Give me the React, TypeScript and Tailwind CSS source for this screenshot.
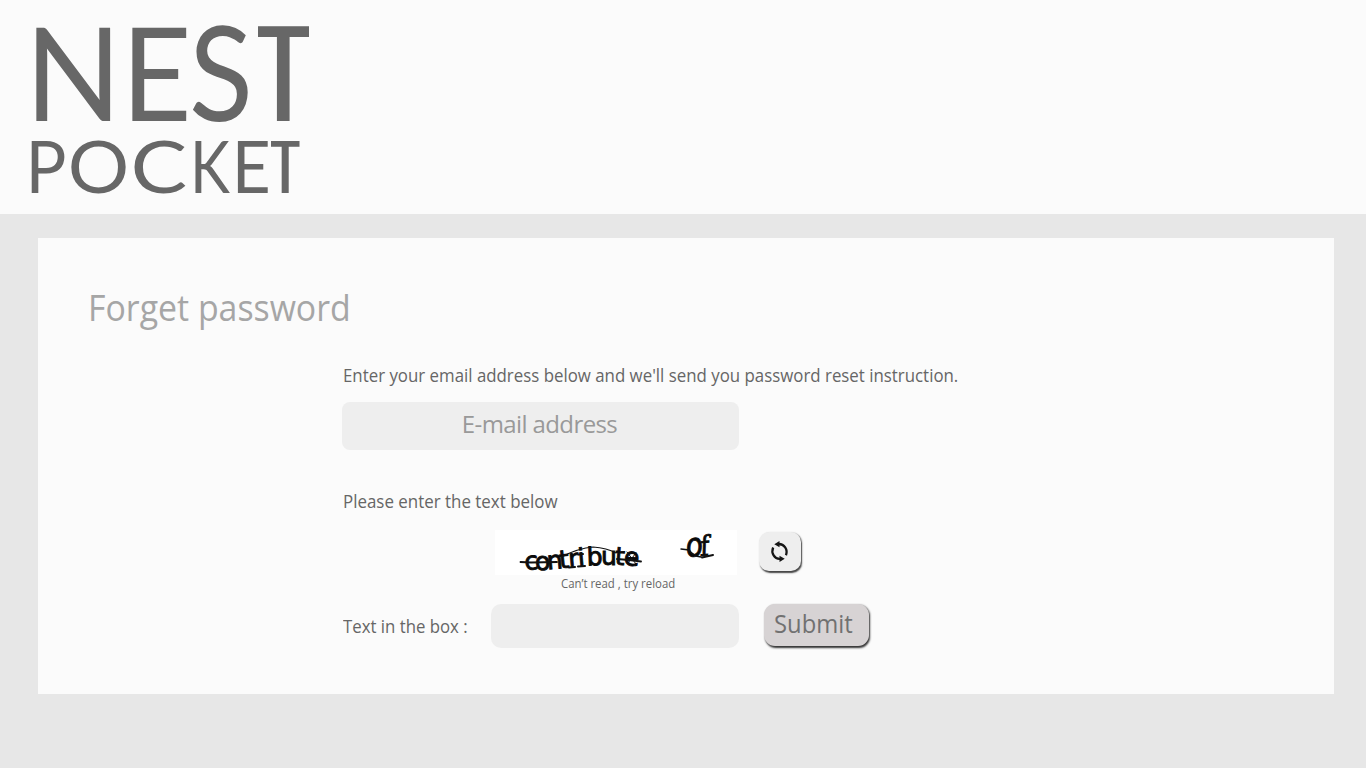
import React from "react";

type Letter = { char: string; left: number; bearing: number; scale: number; clip?: string };

const nest: Letter[] = [
  { char: "N", left: 36.5, bearing: 12, scale: 0.97 },
  { char: "E", left: 132.5, bearing: 12, scale: 0.93 },
  { char: "S", left: 193, bearing: 4.5, scale: 0.9 },
  { char: "T", left: 245.5, bearing: 1, scale: 1, clip: "url(#nest-t)" },
];

const pocket: Letter[] = [
  { char: "P", left: 31.7, bearing: 6.5, scale: 0.94 },
  { char: "O", left: 71, bearing: 3, scale: 1.06 },
  { char: "C", left: 134, bearing: 3, scale: 1.17 },
  { char: "K", left: 195.5, bearing: 6.5, scale: 0.83 },
  { char: "E", left: 237.7, bearing: 6.5, scale: 0.93 },
  { char: "T", left: 264.5, bearing: 0.8, scale: 1, clip: "url(#pocket-t)" },
];

function Word({ letters, size, baseline }: { letters: Letter[]; size: number; baseline: number }) {
  return (
    <>
      {letters.map((l) => (
        <g key={l.char} clipPath={l.clip}>
          <text
            transform={`translate(${l.left} ${baseline}) scale(${l.scale} 1)`}
            x={-l.bearing}
            fontSize={size}
          >
            {l.char}
          </text>
        </g>
      ))}
    </>
  );
}

function Logo() {
  return (
    <svg
      width="320"
      height="214"
      viewBox="0 0 320 214"
      className="font-['Lato',sans-serif] fill-[#676767]"
      aria-label="Nest Pocket"
    >
      <clipPath id="nest-t">
        <rect x="258" y="20" width="51" height="110" />
      </clipPath>
      <clipPath id="pocket-t">
        <rect x="271" y="135" width="28.5" height="62" />
      </clipPath>
      <Word letters={nest} size={131} baseline={121} />
      <Word letters={pocket} size={72.5} baseline={193} />
    </svg>
  );
}

function Captcha() {
  return (
    <svg width="242" height="45" viewBox="0 0 242 45" className="bg-white" aria-label="contribute of">
      <g fill="#0a0a0a" stroke="#0a0a0a" className="font-['DejaVu_Sans',sans-serif]">
        <text
          fontSize="25"
          strokeWidth="0.9"
          x="30 40.5 52.5 65 74 83.5 92 106 119.5 128.5"
          y="40 40.5 39.5 38.5 37.5 36.5 35.5 34.5 34.5 35"
          rotate="-4 -4 -5 -6 -5 -5 -2 0 4 4"
        >
          contribute
        </text>
        <text
          fontSize="33"
          strokeWidth="0.9"
          transform="translate(190.5 27) rotate(-4) skewX(-6) scale(0.85 1)"
        >
          o
          <tspan x="17" fontSize="28" className="font-['DejaVu_Serif',serif]">
            f
          </tspan>
        </text>
      </g>
      <g fill="none" stroke="#111" strokeLinecap="round">
        <path d="M25.5 32 L36 32.5 L62 32" strokeWidth="1.8" />
        <path d="M66 27 Q84 18 98 17 Q112 18 121 23" strokeWidth="1.1" />
        <path d="M83 36.5 L90 36 M74 37.5 L80 37" strokeWidth="2" />
        <path d="M84 24.5 L88 24" strokeWidth="2" />
        <path d="M122 29 L134 30 L146 31.5" strokeWidth="1.9" />
        <path d="M132 22 L141 34 M141 23 L133 33" strokeWidth="1" />
        <path d="M186 19 L194 20 Q198 26 206 27" strokeWidth="1.4" />
        <path d="M207 27.5 L218 25" strokeWidth="2" />
      </g>
    </svg>
  );
}

function ReloadIcon() {
  return (
    <svg width="25" height="25" viewBox="0 0 24 24" aria-hidden="true">
      <g fill="none" stroke="#151515" strokeWidth="2.2">
        <path d="M11 4.8 C16.5 4.6 20.3 9.8 18.2 15.6" />
        <path d="M5.9 8.1 C3.6 13.4 7.2 19.4 12.6 19" />
      </g>
      <path d="M7 5 L12 2 V7.9 Z M17 19 L12 16.1 V22 Z" fill="#151515" />
    </svg>
  );
}

export default function App() {
  return (
    <div className="min-h-screen bg-[#e7e7e7] font-['Open_Sans','Noto_Sans',sans-serif] text-[18px] leading-6 text-[#666]">
      <header className="h-[214px] bg-[#fbfbfb]">
        <Logo />
      </header>
      <main className="mt-6 mr-8 ml-[38px] h-[456px] bg-[#fbfbfb] pt-[46px]">
        <h1 className="ml-[50px] w-max origin-left scale-x-[0.94] text-[36px] leading-[48px] text-[#a6a6a6]">
          Forget password
        </h1>
        <form className="ml-[304px] flex flex-col items-start pt-[31px]" onSubmit={(e) => e.preventDefault()}>
          <p className="ml-px origin-left scale-x-[0.936] whitespace-nowrap">
            Enter your email address below and we'll send you password reset instruction.
          </p>
          <input
            type="email"
            placeholder="E-mail address"
            className="mt-[15px] h-12 w-[397px] rounded-lg bg-[#eee] pr-0.5 pb-1.5 text-center text-[24px] tracking-[-0.6px] outline-none placeholder:text-[#999]"
          />
          <p className="mt-[39px] ml-px origin-left scale-x-[0.94] whitespace-nowrap">Please enter the text below</p>
          <div className="mt-[17px] ml-[153px] flex">
            <div className="flex w-[242px] flex-col">
              <Captcha />
              <p className="ml-[66px] w-max origin-left scale-x-[0.95] text-[12px] leading-[17px]">
                Can’t read , try reload
              </p>
            </div>
            <button
              type="button"
              aria-label="Reload"
              className="mt-0.5 ml-[22px] flex h-[39px] w-[42px] items-center justify-center rounded-[10px] bg-[#eee] pr-0.5 shadow-[1px_1.5px_1.5px_#444]"
            >
              <ReloadIcon />
            </button>
          </div>
          <div className="mt-[12px] flex items-start">
            <label htmlFor="captcha" className="mt-[10px] mr-[14px] ml-px w-[134px] origin-left scale-x-[0.932] whitespace-nowrap">
              Text in the box :
            </label>
            <input id="captcha" className="h-11 w-[248px] rounded-[10px] bg-[#eee] px-3 outline-none" />
            <button
              type="submit"
              className="ml-[25px] h-[42px] w-[105px] rounded-[11px] bg-[#d7d3d4] pr-1.5 pb-1 text-[25px] leading-[38px] text-[#717171] shadow-[1px_1.5px_2px_#333]"
            >
              <span className="inline-block scale-x-[0.95]">Submit</span>
            </button>
          </div>
        </form>
      </main>
    </div>
  );
}
